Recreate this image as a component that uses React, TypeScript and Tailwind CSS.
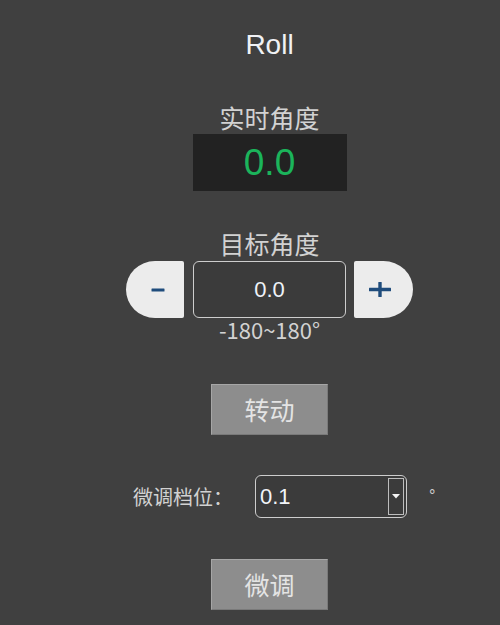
import React from "react";

const cjk = "font-['Noto_Sans_CJK_SC','Noto_Sans',sans-serif]";
const latin = "font-['Liberation_Sans',Arial,sans-serif]";

const GrayButton = ({ label }: { label: string }) => (
  <button
    className={`w-[117px] h-[51px] bg-[#8d8d8d] border border-[#a6a6a6] border-b-[#7a7a7a] border-r-[#7a7a7a] text-[25px] leading-none text-[#e4e4e4] ${cjk}`}
  >
    {label}
  </button>
);

export default function App() {
  return (
    <div className="w-[500px] h-[625px] bg-[#404040] flex flex-col items-center pl-[39px] overflow-hidden">
      <div className={`mt-[29px] h-[32px] leading-[32px] text-[28px] text-[#f0f2f5] ${latin}`}>Roll</div>

      <div className={`mt-[41px] h-[30px] leading-[30px] text-[25px] text-[#d2d2d2] ${cjk}`}>实时角度</div>
      <div className="mt-[2px] w-[154px] h-[57px] bg-[#222222] flex items-center justify-center">
        <span className={`text-[37px] leading-none text-[#1bb45b] ${latin}`}>0.0</span>
      </div>

      <div className={`mt-[37px] h-[30px] leading-[30px] text-[25px] text-[#d2d2d2] ${cjk}`}>目标角度</div>
      <div className="mt-[3px] h-[57px] flex items-stretch">
        <button className="w-[58px] bg-[#ececec] rounded-l-[50%] rounded-r-[2px] flex items-center justify-center pl-[6px]">
          <svg width="14" height="4" viewBox="0 0 14 4">
            <rect x="0.5" y="0.5" width="13" height="3" rx="0.5" fill="#1f4c7c" />
          </svg>
        </button>
        <div className="ml-[9px] w-[153px] border-[1.5px] border-[#cdcdcd] rounded-[6px] bg-[#3b3b3b] flex items-center justify-center">
          <span className={`text-[22px] leading-none text-[#eef2f8] ${latin}`}>0.0</span>
        </div>
        <button className="ml-[8px] w-[59px] bg-[#ececec] rounded-r-[50%] rounded-l-[2px] flex items-center justify-center pr-[7px]">
          <svg width="22" height="15" viewBox="0 0 22 15">
            <rect x="0" y="5.8" width="22" height="3.4" rx="0.5" fill="#1f4c7c" />
            <rect x="9.3" y="0" width="3.4" height="15" rx="0.5" fill="#1f4c7c" />
          </svg>
        </button>
      </div>
      <div className={`h-[22px] leading-[22px] text-[22px] text-[#d2d2d2] ${cjk}`}>-180~180°</div>

      <div className="mt-[44px]">
        <GrayButton label="转动" />
      </div>

      <div className="mt-[40px] self-start ml-[94px] flex items-center">
        <span className={`w-[122px] text-[20px] leading-none text-[#d2d2d2] ${cjk}`}>微调档位：</span>
        <div className="w-[152px] h-[43px] border-[1.5px] border-[#cdcdcd] rounded-[6px] bg-[#3b3b3b] flex items-stretch p-[2px]">
          <span className={`flex-1 flex items-center pl-[2px] text-[22px] leading-none text-[#f2f4f8] ${latin}`}>0.1</span>
          <div className="w-[16px] border border-[#bdbdbd] flex items-center justify-center">
            <svg width="8" height="5" viewBox="0 0 8 5">
              <path d="M0 0 L8 0 L4 4.5 Z" fill="#f4f4f4" />
            </svg>
          </div>
        </div>
        <span className={`ml-[22px] -mt-[2px] text-[16px] leading-none text-[#d2d2d2] ${latin}`}>°</span>
      </div>

      <div className="mt-[41px]">
        <GrayButton label="微调" />
      </div>
    </div>
  );
}
